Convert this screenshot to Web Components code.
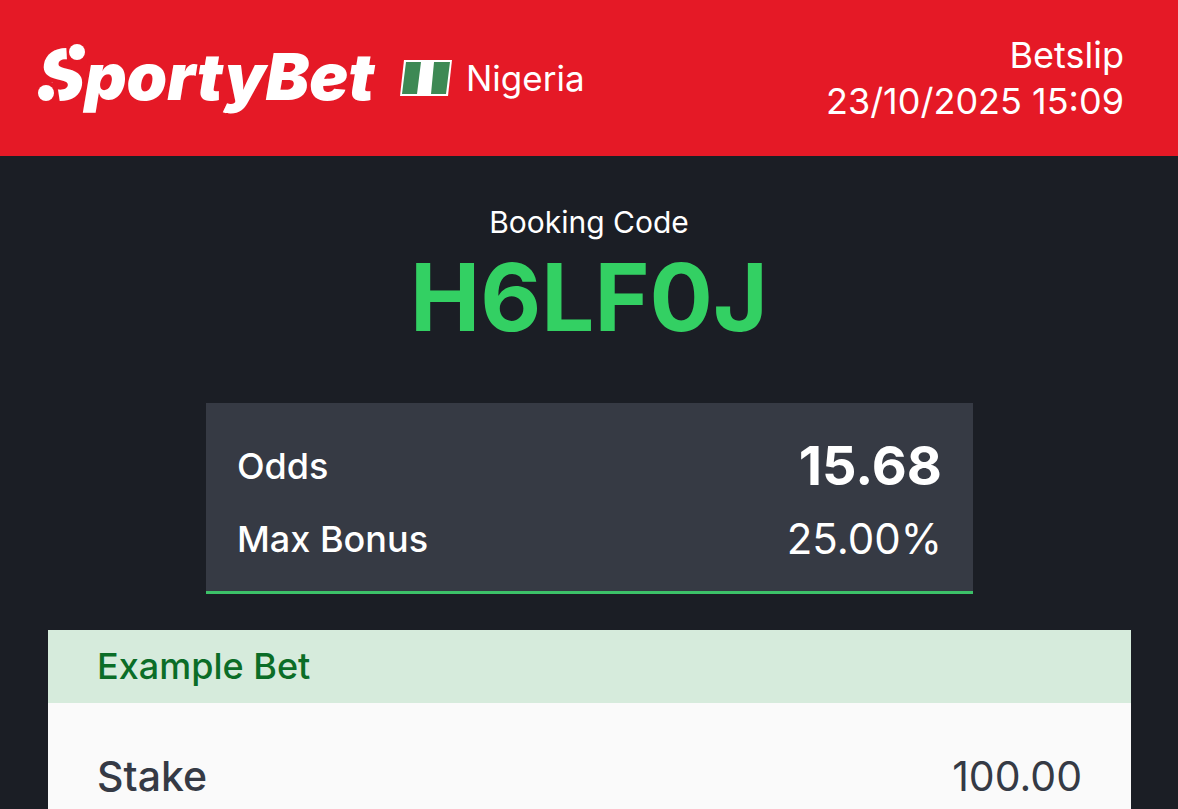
<!DOCTYPE html>
<html lang="en">
<head>
  <meta charset="utf-8">
  <meta name="viewport" content="width=device-width, initial-scale=1">
  <title>SportyBet Betslip</title>
  <style>
    body {
      margin: 0;
      background-color: #1b1e25;
      font-family: Inter, "Liberation Sans", sans-serif;
      color: white;
    }
  </style>
</head>
<body>
  <bet-slip>
    <slip-header slot="header" country="Nigeria">
      <span slot="title">Betslip</span>
      <time slot="date" datetime="2025-10-23T15:09">23/10/2025 15:09</time>
    </slip-header>
    <booking-code>H6LF0J</booking-code>
    <odds-card>
      <slip-row class="odds">Odds<span slot="value">15.68</span></slip-row>
      <slip-row>Max Bonus<span slot="value">25.00%</span></slip-row>
    </odds-card>
    <example-bet>
      <span slot="title">Example Bet</span>
      <slip-row class="stake">Stake<span slot="value">100.00</span></slip-row>
    </example-bet>
  </bet-slip>

  <script>
    class BetSlip extends HTMLElement {
      constructor () {
        super()
        this.shadowDOM = this.attachShadow({ mode: 'open' })
      }

      connectedCallback () {
        this.shadowDOM.innerHTML = `
          <style>
            :host {
              display: flex;
              flex-direction: column;
              min-height: 100vh;
            }

            main {
              flex: 1;
              display: flex;
              flex-direction: column;
              padding-top: 48px;
            }
          </style>
          <slot name="header"></slot>
          <main><slot></slot></main>
        `
      }
    }

    class SportyLogo extends HTMLElement {
      constructor () {
        super()
        this.shadowDOM = this.attachShadow({ mode: 'open' })
      }

      connectedCallback () {
        this.shadowDOM.innerHTML = `
          <style>
            :host {
              display: block;
            }

            svg {
              display: block;
              overflow: visible;
              width: 338px;
              height: 92px;
              fill: white;
              font-family: Inter, sans-serif;
              font-weight: 900;
              font-style: italic;
              font-size: 65px;
            }

            .initial {
              font-size: 70px;
            }

            .cut {
              fill: #e51926;
            }
          </style>
          <svg viewBox="0 0 338 92" role="img" aria-label="SportyBet">
            <text x="0" y="68"><tspan class="initial">S</tspan>portyBet</text>
            <path class="cut" d="M28 10H52L49 34H32L29 28Z"/>
            <path class="cut" d="M0 48L19 51L22 71H0Z"/>
            <circle cx="39" cy="20" r="8"/>
            <circle cx="8" cy="61" r="8"/>
          </svg>
        `
      }
    }

    class SlipHeader extends HTMLElement {
      constructor () {
        super()
        this.shadowDOM = this.attachShadow({ mode: 'open' })
      }

      connectedCallback () {
        this.shadowDOM.innerHTML = `
          <style>
            :host {
              display: block;
              background-color: #e51926;
              font-size: 36px;
              line-height: 46px;
            }

            header {
              display: flex;
              align-items: center;
              justify-content: space-between;
              padding: 32px 54px 32px 38px;
            }

            .brand {
              display: flex;
              align-items: center;
              gap: 24px;
            }

            .country {
              display: flex;
              align-items: center;
              gap: 14px;
              font-size: 35px;
            }

            .flag {
              display: block;
              width: 52px;
              height: 36px;
            }

            .info {
              display: flex;
              flex-direction: column;
              text-align: right;
            }
          </style>
          <header>
            <div class="brand">
              <sporty-logo></sporty-logo>
              <div class="country">
                <svg class="flag" viewBox="0 0 52 36" aria-hidden="true">
                  <path fill="#fff" d="M4 0H52L48 36H0Z"/>
                  <path fill="#3d8954" d="M6 2H21L17 34H2Z"/>
                  <path fill="#3d8954" d="M34 2H50L46 34H31Z"/>
                </svg>
                <span>${this.getAttribute('country')}</span>
              </div>
            </div>
            <div class="info">
              <slot name="title"></slot>
              <slot name="date"></slot>
            </div>
          </header>
        `
      }
    }

    class BookingCode extends HTMLElement {
      constructor () {
        super()
        this.shadowDOM = this.attachShadow({ mode: 'open' })
      }

      connectedCallback () {
        this.shadowDOM.innerHTML = `
          <style>
            :host {
              display: block;
              margin-bottom: 49px;
              text-align: center;
            }

            p, h1 {
              margin: 0;
            }

            p {
              font-size: 30px;
              line-height: 36px;
            }

            h1 {
              color: #33d063;
              font-size: 94px;
              font-weight: 700;
              line-height: 114px;
            }
          </style>
          <p>Booking Code</p>
          <h1><slot></slot></h1>
        `
      }
    }

    class OddsCard extends HTMLElement {
      constructor () {
        super()
        this.shadowDOM = this.attachShadow({ mode: 'open' })
      }

      connectedCallback () {
        this.shadowDOM.innerHTML = `
          <style>
            :host {
              display: block;
              margin: 0 205px 36px 206px;
              padding: 26px 31px 16px;
              background-color: #363a44;
              border-bottom: 3px solid #3cc168;
            }
          </style>
          <slot></slot>
        `
      }
    }

    class SlipRow extends HTMLElement {
      constructor () {
        super()
        this.shadowDOM = this.attachShadow({ mode: 'open' })
      }

      connectedCallback () {
        this.shadowDOM.innerHTML = `
          <style>
            :host {
              display: flex;
              align-items: center;
              justify-content: space-between;
              height: 73px;
            }

            .label {
              font-size: 36px;
              font-weight: 500;
            }

            .value {
              font-size: 42px;
            }

            :host(.odds) .value {
              font-size: 54px;
              font-weight: 700;
            }

            :host(.stake) {
              height: 64px;
            }

            :host(.stake) .label,
            :host(.stake) .value {
              font-size: 41px;
            }
          </style>
          <span class="label"><slot></slot></span>
          <span class="value"><slot name="value"></slot></span>
        `
      }
    }

    class ExampleBet extends HTMLElement {
      constructor () {
        super()
        this.shadowDOM = this.attachShadow({ mode: 'open' })
      }

      connectedCallback () {
        this.shadowDOM.innerHTML = `
          <style>
            :host {
              display: block;
              flex: 1;
              margin: 0 47px 0 48px;
              background-color: #fafafa;
              color: #353a45;
            }

            h2 {
              margin: 0;
              padding: 0 49px;
              background-color: #d6ebdc;
              color: #0b6d27;
              font-size: 36px;
              font-weight: 500;
              line-height: 73px;
            }

            .rows {
              padding: 41px 49px 0;
            }
          </style>
          <h2><slot name="title"></slot></h2>
          <div class="rows"><slot></slot></div>
        `
      }
    }

    customElements.define('bet-slip', BetSlip)
    customElements.define('sporty-logo', SportyLogo)
    customElements.define('slip-header', SlipHeader)
    customElements.define('booking-code', BookingCode)
    customElements.define('odds-card', OddsCard)
    customElements.define('slip-row', SlipRow)
    customElements.define('example-bet', ExampleBet)
  </script>
</body>
</html>
